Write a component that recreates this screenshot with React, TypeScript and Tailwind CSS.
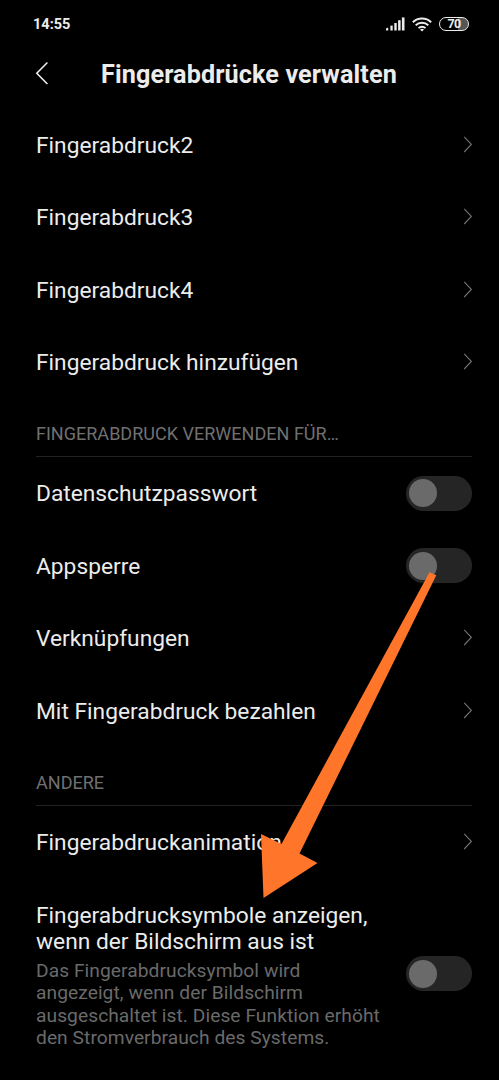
import React from "react";

function Chevron() {
  return (
    <svg className="h-[18px] w-[10px] shrink-0" viewBox="0 0 10 18" fill="none" stroke="#737373" strokeWidth="1.1">
      <path d="M2.2 0.8 L9.3 8.4 L2.2 16" />
    </svg>
  );
}

function Toggle() {
  return (
    <div className="flex h-[35px] w-[66px] shrink-0 items-center rounded-full bg-[#252525] pl-[3px]">
      <div className="size-7 rounded-full bg-[#6a6a6a]" />
    </div>
  );
}

function Row({ label, toggle = false }: { label: string; toggle?: boolean }) {
  return (
    <div className="flex h-[72.5px] items-center justify-between">
      <span className="pt-[2px] text-[22.75px] leading-[26px] whitespace-nowrap">{label}</span>
      {toggle ? <Toggle /> : <Chevron />}
    </div>
  );
}

function SectionTitle({ children }: { children: React.ReactNode }) {
  return (
    <div className="flex h-[58.5px] items-center border-b border-[#222222] pt-[14px] text-[18.05px] leading-[22px] text-[#707070]">
      <span className="whitespace-nowrap">{children}</span>
    </div>
  );
}

function StatusBar() {
  return (
    <div className="flex h-12 items-center justify-between pr-[30px] pl-[33px]">
      <span className="pt-[2px] text-[14.5px] font-bold">14:55</span>
      <div className="flex items-center">
        <svg className="h-[14px] w-[19px]" viewBox="0 0 19 14" fill="#ececec">
          <path d="M0 11.5 L2.2 10.5 V13.5 H0 Z" />
          <rect x="4.4" y="8.6" width="2.3" height="4.9" />
          <rect x="8.3" y="6" width="2.4" height="7.5" />
          <rect x="12.1" y="3.2" width="2.5" height="10.3" />
          <rect x="15.9" y="0.4" width="2.6" height="13.1" />
        </svg>
        <svg className="ml-[7px] h-[15px] w-[20px]" viewBox="0 0 20 15" fill="none" stroke="#ececec" strokeWidth="1.9">
          <path d="M0.8 5.2 C5.9 0.2 14.1 0.2 19.2 5.2" />
          <path d="M3.7 8.3 C7.2 4.9 12.8 4.9 16.3 8.3" />
          <path d="M6.5 11.2 C8.5 9.2 11.5 9.2 13.5 11.2" />
          <path d="M8 12.5 Q10 11 12 12.5 L10 14.6 Z" fill="#ececec" stroke="none" />
        </svg>
        <div className="ml-[7px] flex h-[14px] w-[30px] items-center justify-center rounded-full border-[1.5px] border-[#ececec] bg-linear-to-r from-black from-66% to-[#555555] to-66% text-[12.5px] leading-none font-bold tracking-[-0.6px]">
          70
        </div>
      </div>
    </div>
  );
}

export default function App() {
  return (
    <div className="relative h-[1080px] w-[499px] overflow-hidden bg-black font-['Roboto',sans-serif] text-[#ececec]">
      <StatusBar />
      <header className="flex h-[60.5px] items-start pl-[35px]">
        <svg className="mt-[13px] h-6 w-[14px]" viewBox="0 0 14 24" fill="none" stroke="#ececec" strokeWidth="1.6">
          <path d="M12.4 1.5 L1.8 12.2 L12.4 23" />
        </svg>
        <h1 className="mt-[13px] ml-[52px] text-[25.2px] leading-[28px] font-bold tracking-[0.11px] whitespace-nowrap">
          Fingerabdrücke verwalten
        </h1>
      </header>
      <main className="pr-[27px] pl-9">
        <Row label="Fingerabdruck2" />
        <Row label="Fingerabdruck3" />
        <Row label="Fingerabdruck4" />
        <Row label="Fingerabdruck hinzufügen" />
        <SectionTitle>FINGERABDRUCK VERWENDEN FÜR…</SectionTitle>
        <Row label="Datenschutzpasswort" toggle />
        <Row label="Appsperre" toggle />
        <Row label="Verknüpfungen" />
        <Row label="Mit Fingerabdruck bezahlen" />
        <SectionTitle>ANDERE</SectionTitle>
        <Row label="Fingerabdruckanimation" />
        <div className="flex items-center justify-between pt-[25px]">
          <div>
            <p className="text-[22.75px] leading-[26.3px] whitespace-nowrap">
              Fingerabdrucksymbole anzeigen,
              <br />
              wenn der Bildschirm aus ist
            </p>
            <p className="mt-[4px] -mb-[5px] text-[19.2px] leading-[22.6px] tracking-[0.06px] whitespace-nowrap text-[#6a6a6a]">
              Das Fingerabdrucksymbol wird
              <br />
              angezeigt, wenn der Bildschirm
              <br />
              ausgeschaltet ist. Diese Funktion erhöht
              <br />
              den Stromverbrauch des Systems.
            </p>
          </div>
          <Toggle />
        </div>
      </main>
      <svg className="pointer-events-none absolute top-0 left-0 h-[1080px] w-[499px]" viewBox="0 0 499 1080" fill="#ff7529">
        <path d="M429.5 572.3 L436.3 575.3 L299.5 853.5 L317.5 863 L263.5 898 L261 834 L281.5 844 Z" />
      </svg>
    </div>
  );
}
